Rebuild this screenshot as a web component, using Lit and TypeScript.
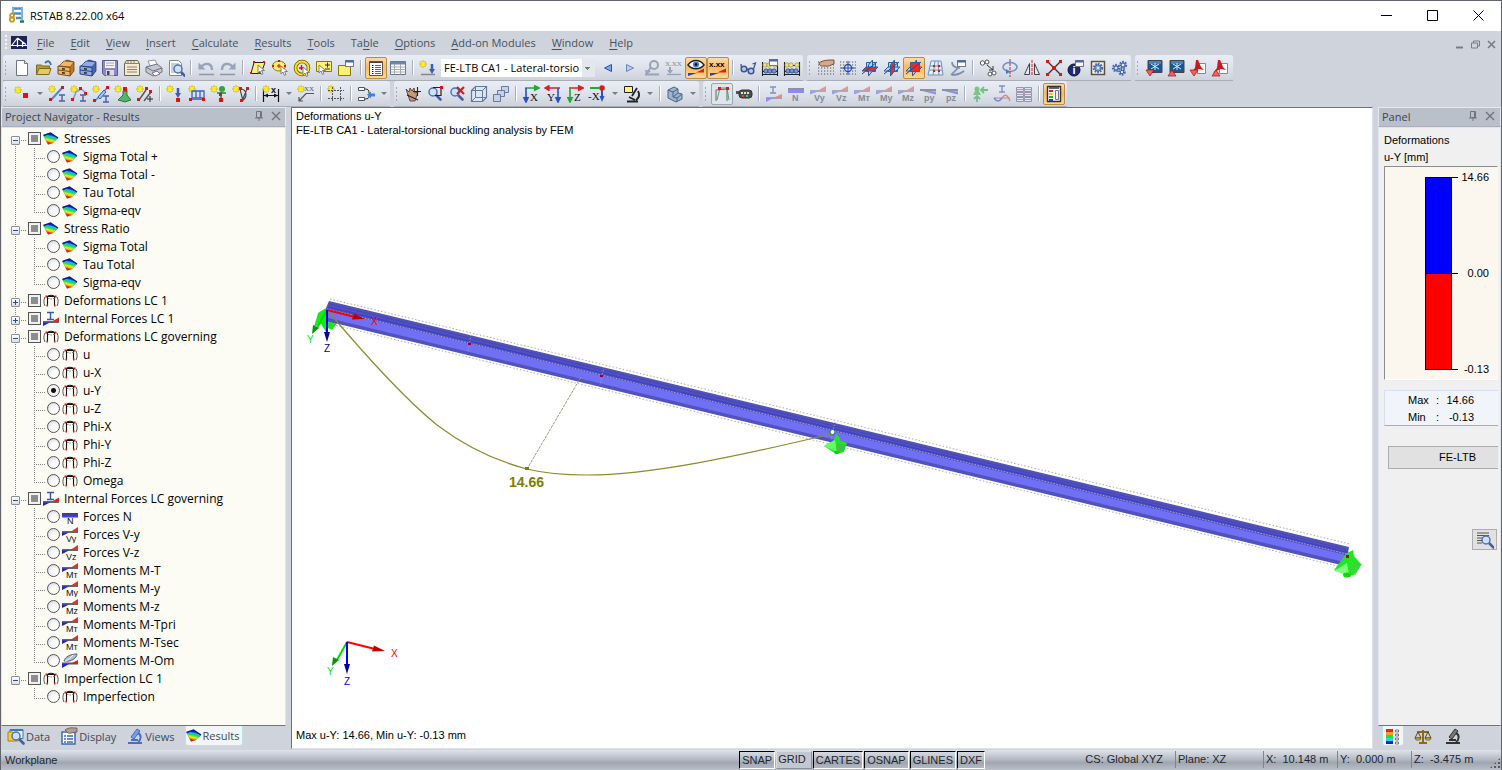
import { LitElement, html, svg, css, TemplateResult } from "lit";
import { customElement, property, state } from "lit/decorators.js";
import { classMap } from "lit/directives/class-map.js";

/* ---------- icon building blocks ---------- */

const star = (x: number, y: number) => svg`<g transform="translate(${x} ${y})">
  <path d="M-3.5 0H3.5M0-3.5V3.5M-2.5-2.5L2.5 2.5M2.5-2.5L-2.5 2.5" stroke="#b5a400" stroke-width="1.4"/>
  <path d="M-3 0H3M0-3V3M-2-2L2 2M2-2L-2 2" stroke="#ffee20" stroke-width="1.2"/></g>`;
const node = (x: number, y: number, s = 3) =>
  svg`<rect x=${x} y=${y} width=${s} height=${s} fill="#e01212"/>`;
const lens = (x: number, y: number) => svg`
  <path d="M${x + 3} ${y + 3}l4.500 4.500" stroke="#4a5c9c" stroke-width="2.600" stroke-linecap="round"/>
  <circle cx=${x} cy=${y} r="4" fill="#cfe2fb" stroke="#5470b4" stroke-width="1.500"/>`;
const cursor = (x: number, y: number) =>
  svg`<path transform="translate(${x} ${y})" d="M0 0v8l2-2 1.500 3.500 1.500-.8L3.600 5.500H6.500z" fill="#fff" stroke="#777" stroke-width=".9"/>`;
const label = (t: string, x: number, y: number, size = 9, fill = "#333") =>
  svg`<text x=${x} y=${y} font-size=${size} fill=${fill} font-family="Liberation Sans, sans-serif" font-weight="bold">${t}</text>`;
const serif = (t: string, x: number, y: number, size = 9, fill = "#111") =>
  svg`<text x=${x} y=${y} font-size=${size} fill=${fill} font-family="Liberation Serif, serif">${t}</text>`;
const ibeam = (x: number, y: number, c = "#4a60a8") =>
  svg`<path d="M${x} ${y}h6M${x + 3} ${y}v6M${x} ${y + 6}h6" stroke=${c} stroke-width="1.4"/>`;
const cabinet = (a: string, b: string, c: string) => svg`
  <path d="M5 4l5-3 7 2v9l-4 5z" fill=${b} stroke=${c} stroke-width=".8"/><path d="M2 7l5-5 10 1-4 5z" fill=${a} stroke=${c} stroke-width=".6"/>
  <path d="M1 7l12 1.500V17L1 15z" fill=${a} stroke=${c} stroke-width=".9"/>
  <path d="M1 11l12 1.500" stroke=${c} stroke-width=".9"/>
  <path d="M5 9.700l3 .4M5 13.700l3 .4" stroke="#222" stroke-width="1.400"/>`;
const plane = (mode: number) => {
  const square = svg`<path d="M5.500 3.500h9v9h-9z" fill=${mode === 2 ? "#f02828" : "#a9d2f4"}/>`;
  const flat = svg`<path d="M1 12l4-4h12l-4 4z" fill=${mode === 0 ? "#f02828" : "#a9d2f4"}/>`;
  const side = svg`<path d="M7.500 6l4-5v11l-4 5z" fill=${mode === 1 ? "#f02828" : "#a9d2f4"}/>`;
  const order = mode === 2 ? [flat, side, square] : mode === 0 ? [square, side, flat] : [square, flat, side];
  return svg`<g stroke="#2b5da0">${order}<path d="M1 15l15-12" stroke="#1f4c90"/></g>`;
};
const axes = (h: string, v: string, t: string, flip = false) => svg`
  <path d=${flip ? "M16 3H3M5.500 .5L1 3l4.500 2.500" : "M3 3h12M12 .5L17 3l-5 2.500"} stroke=${h} fill=${h} stroke-width="1.6"/>
  <path d=${flip ? "M14 3v12M11.500 12L14 17l2.500-5" : "M4 3v12M1.500 12L4 17l2.500-5"} stroke=${v} fill=${v} stroke-width="1.6"/>
  ${serif(t, flip ? 3 : 8, 16, 11)}`;
const force = (t: string, kind = 0) => svg`
  ${kind === 1
    ? svg`<path d="M1 3h16v3H1z" fill="#8d919b"/><path d="M1 5h16v3H1z" fill="#8c8cf0"/>`
    : kind === 2
      ? svg`<path d="M1 4h16v2H1z" fill="#8d919b"/><path d="M1 5.500l16 1v3z" fill="#8c8cf4"/>`
      : svg`<path d="M1 6h16" stroke="#9a9ea8" stroke-width="1.600"/><path d="M9 5.500L17 1v4.500z" fill="#e4949a"/><path d="M1 6.500h8l-8 3z" fill="#9c9cf4"/>`}
  ${label(t, 5, 16, 9, "#868b95")}`;
const treeForce = (t: string, n = false) => svg`
  ${n
    ? svg`<path d="M0 4h16v2H0z" fill="#444"/><path d="M0 5.500h16v3H0z" fill="#3a3af0"/>`
    : svg`<path d="M0 5h16" stroke="#555" stroke-width="1.800"/><path d="M9 4.500L16 0v4.500z" fill="#e03030"/><path d="M0 5.500h7L0 9z" fill="#2020e8"/>`}
  <text x=${n ? 5 : 4} y="15" font-size="9" fill="#111" font-family="Liberation Sans, sans-serif">${t}</text>`;
const gear = (x: number, y: number, r: number, c = "#4a6cb8") => svg`
  <circle cx=${x} cy=${y} r=${r} fill="none" stroke=${c} stroke-width="2.400" stroke-dasharray="1.600 1"/>
  <circle cx=${x} cy=${y} r=${r - 0.8} fill="#8ca8dc" stroke="#2c4a90" stroke-width=".8"/>
  <circle cx=${x} cy=${y} r="1" fill="#fff"/>`;
const abacus = svg`
  <path d="M1.500 3v14M16.500 3v14M1 6.500h16M1 12.500h16M1 15.500h16" stroke="#222" stroke-width="1.100"/>
  <g fill="#f0e08c" stroke="#8d8030" stroke-width=".6"><circle cx="4" cy="6" r="2.200"/><circle cx="8" cy="6" r="2.200"/><circle cx="14" cy="6" r="2.200"/></g>
  <g fill="#7c98dc" stroke="#1d2f66" stroke-width=".7"><circle cx="5" cy="12" r="2.200"/><circle cx="9" cy="12" r="2.200"/><circle cx="13" cy="12" r="2.200"/></g>`;
const microscope = (c: string, d: string) => svg`
  <path d="M2 16h14M5 13h7" stroke=${d} stroke-width="2"/><path d="M11 2l3 2-6 8-3-2z" fill=${c} stroke=${d}/>
  <path d="M12 6c4 2 3 7 0 9" fill="none" stroke=${d} stroke-width="2"/>`;
const miniwin = (x: number, y: number) => svg`
  <rect x=${x} y=${y} width="8" height="6" fill="#fff" stroke="#778" /><path d="M${x} ${y + 1}h8" stroke="#4a66a8" stroke-width="2"/>`;
const grid9 = svg`<path d="M1 3h16M1 6h16M1 9h16M1 12h16M1 15h16" stroke="#555" stroke-width="1.200" stroke-dasharray="1.200 1.800"/>`;
const dxf = svg`<path d="M3 1.500h14v12H3z" fill="#17589c" stroke="#444"/><path d="M4 2h12v3H4z" fill="#3d84c4"/><path d="M6 5l8 5M14 5L6 10M10 4v7" stroke="#d8ecfa"/>`;
const pdf = svg`<path d="M8.500 4.500h8v10h-8z" fill="#fff" stroke="#888"/><path d="M7 1l2 0 3 7 3 3-5-1-5 2-3 2 4-5z" fill="#d01818"/>`;
const triDown = svg`<path d="M1 11h8l-4 6z" fill="#f86060" stroke="#a01010" stroke-width=".7"/>`;
const triUp = svg`<path d="M1 17h8l-4-6z" fill="#f86060" stroke="#a01010" stroke-width=".7"/>`;

const ICONS: Record<string, TemplateResult | unknown> = {
  newdoc: svg`<path d="M3.500 1.500h8l3 3v12h-11z" fill="#fff" stroke="#70757f"/><path d="M11.500 1.500v3h3" fill="#e6e8ee" stroke="#70757f"/>`,
  open: svg`<path d="M1.500 15.500V6h5l1 1h7v3" fill="#b89c30" stroke="#7d6a18"/><path d="M1.500 15.500L4 9.500h12l-2 6z" fill="#e2cc62" stroke="#7d6a18"/><path d="M10 4c3-3 5-2 6 2" fill="none" stroke="#466a9c" stroke-width="1.800"/>`,
  archA: cabinet("#f2b764", "#c07a25", "#6b3f0d"),
  archB: cabinet("#8fabea", "#4468b8", "#1e356e"),
  save: svg`<path d="M1.500 1.500h15v15h-13l-2-2z" fill="#8c86cc" stroke="#5c5898"/><path d="M4 2h10v7H4z" fill="#f3f3f8"/><path d="M5 4h8M5 6.500h8" stroke="#aaa"/><path d="M5 11h8v5.500H5z" fill="#dcdce6"/><path d="M6 12h2.500v4H6z" fill="#444"/>`,
  clip: svg`<path d="M1.500 4.500l2-3h11l2 3v12h-15z" fill="#f5ead2" stroke="#6b6350"/><path d="M1.500 4.500h15M5 2v2M8 2v2M11 2v2M4 8h10M4 10.500h10M4 13h10" stroke="#8c806a"/>`,
  print: svg`<path d="M3 2l7-1 3 6-7 2z" fill="#fff" stroke="#999"/><path d="M1 8l11-3 5 4v4l-9 4-7-4z" fill="#c5c8d2" stroke="#70747f"/><path d="M1 8l7 4 9-3" fill="none" stroke="#70747f"/><path d="M7 14l5-2 3 3-5 2z" fill="#fff" stroke="#7a6ba0"/>`,
  preview: svg`<path d="M2.500 1.500h9l3 3v12h-12z" fill="#fff" stroke="#888"/><path d="M4 5h8M4 7h6M4 9h5M4 11h4M4 13h5" stroke="#9a9fa9"/>${lens(11, 10)}`,
  undo: svg`<path d="M4 8c4-5 11-4 11 3" fill="none" stroke="#98a4ba" stroke-width="2.400"/><path d="M1.500 3.500v7h7z" fill="#98a4ba"/><path d="M2 15.500h15" stroke="#8f97a6" stroke-width="1.500"/>`,
  redo: svg`<path d="M14 8C10 3 3 4 3 11" fill="none" stroke="#98a4ba" stroke-width="2.400"/><path d="M16.500 3.500v7h-7z" fill="#98a4ba"/><path d="M1 15.500h15" stroke="#8f97a6" stroke-width="1.500"/>`,
  selPoly: svg`<path d="M5 3.500h11l-4 11H2z" fill="#ffef70" stroke="#222"/>${node(4, 2, 2)}${node(14, 2, 2)}${node(1, 13, 2)}${node(9, 13, 2)}${cursor(9, 6)}`,
  selEll: svg`<ellipse cx="8" cy="7" rx="6.500" ry="5" fill="#ffef70" stroke="#8a7a00"/>${node(7, 1, 2)}${node(1, 6, 2)}${node(13, 6, 2)}<path d="M6 7h4M8 5v4" stroke="#e00"/>${cursor(10, 7)}`,
  selRing: svg`<circle cx="9" cy="9" r="6.500" fill="none" stroke="#6b5b00" stroke-width="3.500"/><circle cx="9" cy="9" r="6.500" fill="none" stroke="#ffe020" stroke-width="2"/><path d="M6 9h5M8.500 6v5" stroke="#e00" stroke-width="1.300"/>${cursor(10, 8)}`,
  selPm: svg`<path d="M1.500 2.500h15v10h-15z" fill="#ffef70" stroke="#8a7a00"/><path d="M10 6h5M12.500 3.500v5M10 10h5" stroke="#333"/>${cursor(4, 6)}`,
  selWin: svg`<path d="M1.500 6.500h12v10h-12z" fill="#ffef70" stroke="#8a7a00"/>${miniwin(8.5, 1.5)}`,
  navList: svg`<path d="M2.500 2.500h13v14h-13z" fill="#fff" stroke="#555"/><path d="M2.500 3.500h13" stroke="#445"/><path d="M5 6.500h1.500M5 8.500h1.500M5 10.500h1.500M5 12.500h1.500M5 14.500h1.500" stroke="#222"/><path d="M8 6.500h6M8 8.500h6M8 10.500h6M8 12.500h6M8 14.500h6" stroke="#666"/>`,
  table: svg`<path d="M1.500 2.500h15v13h-15z" fill="#fff" stroke="#66707e"/><path d="M1.500 2.500h15v3h-15z" fill="#6886b4"/><path d="M5.500 5v10.500M11.500 5v10.500M1.500 8h15M1.500 10.500h15M1.500 13h15" stroke="#a3aab6"/>`,
  loadNew: svg`${star(4, 5)}<path d="M2 15.500h14" stroke="#888" stroke-width="1.500"/><path d="M13 5v6" stroke="#3c60b0" stroke-width="2.500"/><path d="M10 10h6l-3 5z" fill="#3c60b0"/>`,
  prev: svg`<path d="M12.500 5.500v7l-7-3.500z" fill="#7ea4ee" stroke="#2a52b0"/>`,
  next: svg`<path d="M5.500 5.500v7l7-3.500z" fill="#b9cbee" stroke="#6a84bc"/>`,
  showP: svg`<circle cx="11" cy="6" r="4" fill="#dfe3ea" stroke="#98a3b8" stroke-width="2"/><path d="M8 8L4 14M2 15.500h14" fill="none" stroke="#98a3b8" stroke-width="1.800"/><path d="M2 11l6 1-5 4z" fill="#98a3b8"/>`,
  showX: svg`${serif("X.XX", 0, 7, 7, "#888")}<path d="M2 15.500h14" stroke="#98a3b8" stroke-width="1.300"/><path d="M5 8v4" stroke="#98a3b8" stroke-width="2"/><path d="M2 11h6l-3 4z" fill="#98a3b8"/>`,
  eye: svg`<path d="M1 6c4-6 12-6 16 0-4 5-12 5-16 0z" fill="#fff" stroke="#222" stroke-width="1.400"/><circle cx="9" cy="5.500" r="3" fill="#3b7ad0"/><circle cx="9" cy="5.500" r="1.300" fill="#000"/><path d="M1 17v-3h9z" fill="#2a3ae8"/><path d="M9 13.500h8v-4z" fill="#e02020"/>`,
  xxx: svg`${label("x.xx", 0, 8, 8, "#000")}<path d="M1 17v-3h9z" fill="#2a3ae8"/><path d="M8 13.500h9v-4z" fill="#e02020"/>`,
  glasses: svg`<circle cx="5" cy="10" r="2.800" fill="#b7c9ec" stroke="#3c5490" stroke-width="1.500"/><circle cx="12" cy="12" r="2.800" fill="#b7c9ec" stroke="#3c5490" stroke-width="1.500"/><path d="M8 11c0-1 1-1 2 0M2.500 9L2 5M14.500 10l2-6-3 1" fill="none" stroke="#3c5490" stroke-width="1.300"/>`,
  calcWin: svg`${abacus}${miniwin(8.5, 0.5)}`,
  calc: abacus,
  handGrid: svg`${grid9}<path d="M2 4c4-3 9-3 15-3v4c-4 1-5 3-9 2-3 0-5 1-6-3z" fill="#d9a784" stroke="#59351d" stroke-width=".8"/>`,
  snapGrid: svg`${grid9}<circle cx="9" cy="9" r="3.500" fill="#dfe5f4" stroke="#2848b8" stroke-width="1.300"/><path d="M9 2v14M2 9h14" stroke="#2848b8"/>`,
  planeXY: plane(0), planeYZ: plane(1), planeXZ: plane(2),
  gridMesh: svg`<path d="M4 2h10l2 14H1zM3 7h12M2 11h13M8 2L6 16M11 2l1 14" fill="#e2eef8" stroke="#6c94b8"/>${node(6, 6, 2)}${node(11, 6, 2)}${node(6, 11, 2)}${node(11, 11, 2)}`,
  wrench: svg`<path d="M2 16l8-8M3 3c0 5 4 6 8 6M3 16c3 0 8-1 12-4" fill="none" stroke="#7a8cb0" stroke-width="1.700"/>${miniwin(8.5, 1.5)}`,
  copyMove: svg`<circle cx="3.500" cy="4" r="2.200" fill="#fff" stroke="#555"/><circle cx="8" cy="3" r="2" fill="#fff" stroke="#555"/><path d="M8 6l6 5m0-4v4h-4" fill="none" stroke="#333"/><circle cx="11" cy="15" r="2" fill="#fff" stroke="#555"/><circle cx="15" cy="14" r="2" fill="#fff" stroke="#555"/>`,
  rotate: svg`<ellipse cx="9" cy="8" rx="7" ry="4.500" fill="none" stroke="#6c94cc" stroke-width="1.600"/><path d="M9 0v18" stroke="#e02020" stroke-dasharray="3 1"/><path d="M5 10l4 3-4 2z" fill="#4878c0"/>`,
  mirror: svg`<path d="M1.500 15.500h5v-11zM16.500 15.500h-5v-11z" fill="#e6e9ef" stroke="#444"/><path d="M9 1v16" stroke="#e02020" stroke-dasharray="3 1"/>`,
  explode: svg`<path d="M2 2l14 14M16 2L2 16" stroke="#333" stroke-width="1.400"/>${node(1, 1)}${node(14, 1)}${node(1, 14)}${node(14, 14)}${node(7, 7, 4)}`,
  infoWin: svg`<circle cx="7" cy="11" r="6" fill="#1c2c70" stroke="#0a1440"/>${label("i", 5.5, 15, 11, "#fff")}${miniwin(8.5, 1.5)}`,
  gearBox: svg`<path d="M2.500 2.500h13v13h-13z" fill="#f4efe4" stroke="#5b5340" stroke-width="1.500"/>${gear(9, 9, 4)}`,
  gears: svg`${gear(5, 9, 3)}${gear(12, 6, 3)}${gear(11, 13, 2.6)}`,
  impA: svg`${dxf}${triDown}`, impB: svg`${dxf}${triUp}`, impC: svg`${pdf}${triDown}`, impD: svg`${pdf}${triUp}`,

  nNode: svg`${star(5, 5)}${node(10, 8, 5)}`,
  nLine: svg`${star(4, 4)}<path d="M3 15L14 3" stroke="#5088d0" stroke-width="2"/>${node(13, 1)}${node(1, 13)}${ibeam(11, 10)}`,
  nPoly: svg`${star(4, 4)}<path d="M3 15l3-8 5-3 5 4" fill="none" stroke="#7aa0d8" stroke-width="1.600"/>${node(9, 2)}${node(14, 7)}${node(1, 13)}${ibeam(10, 10)}`,
  nMember: svg`${star(4, 4)}<path d="M3 16L15 3" stroke="#5088d0" stroke-width="1.400"/><path d="M6 12l6-7 2 2-6 7z" fill="#9cc8f4" stroke="#3060b0"/>${node(14, 1)}${node(1, 14)}${ibeam(11, 11)}`,
  nSupp: svg`${star(4, 4)}<path d="M9 6h4v4l4 5-6 2-7-2 5-5z" fill="#56b468" stroke="#176426" stroke-width=".8"/>${node(9, 2, 4)}`,
  nHinge: svg`${star(4, 4)}<path d="M3 15L10 5M8 16l7-9" stroke="#555" stroke-width="1.400"/>${node(9, 2)}${node(13, 5)}${node(1, 13)}<path d="M11 14h6M14 11v6" stroke="#222"/>`,
  nLoad: svg`${star(4, 4)}<path d="M12 3v6" stroke="#3c60b0" stroke-width="2.500"/><path d="M9 8h6l-3 5z" fill="#3c60b0"/>${node(10, 13, 4)}`,
  mLoad: svg`${star(4, 4)}<path d="M4 6h12v7H4zM8 6v7M12 6v7" stroke="#3a62c0" stroke-width="1.300"/><path d="M2 14.500h15" stroke="#777"/>${node(1, 13)}${node(14, 13)}`,
  nDisp: svg`${star(4, 4)}<circle cx="12" cy="4" r="3" fill="#38a048"/><path d="M7 8h9M11 7v8" stroke="#28803a" stroke-width="1.600"/>${node(9, 8)}${node(9, 13, 4)}`,
  nImp: svg`${star(4, 4)}<path d="M8 4c7 0 8 8 2 12M8 4l3 12M15 4l-5 12" fill="none" stroke="#444" stroke-width="1.100"/>${node(7, 2)}${node(14, 2)}${node(8, 14)}`,
  dim: svg`<path d="M1.500 4v13M16.500 4v13M2 10.500h14" stroke="#111" stroke-width="1.200"/><path d="M2 10.500l4-2v4zM16 10.500l-4-2v4z" fill="#111"/>${star(4, 4)}${label("x", 9, 8, 9, "#111")}`,
  comment: svg`${star(4, 4)}${serif("XX", 7, 6, 7, "#555")}<path d="M17 8.500H9L2 16m0-4v4h4" fill="none" stroke="#555" stroke-width="1.200"/>`,
  guide: svg`${star(4, 4)}<path d="M5.500 2v15M13.500 2v15M1 5.500h16M1 13.500h16" stroke="#555" stroke-dasharray="2 1"/>`,
  flow: svg`<path d="M1.500 2.500h6v3h-6zM1.500 12.500h6v3h-6z" fill="#fff" stroke="#555"/><path d="M8 4c3 0 4 1 4 4M8 14c3 0 4-1 4-3" stroke="#333" fill="none"/><path d="M10 9.500l4-3v2h4v3h-4v2z" fill="#3c82dc"/>`,
  pan: svg`<path d="M2 4l3 3 1-4 2 3 2-3 1 5 3-1-3 9H6z" fill="#c49a7a" stroke="#4b3020" stroke-width=".8"/><path d="M13.500 2v9M9 6.500h8M3 10l11 5" stroke="#222" stroke-width="1.100"/>`,
  zoomWin: svg`${lens(7, 7)}<path d="M7 2.500h8v8H9" fill="none" stroke="#222" stroke-width="1.200"/>${node(14, 1)}`,
  zoomOff: svg`${lens(7, 7)}<path d="M9 2l7 7M16 2L9 9" stroke="#d81c1c" stroke-width="2.200"/>`,
  cube: svg`<path d="M1.500 5.500l4-4h11v11l-4 4h-11z" fill="#dce6f6" stroke="#6478a4" stroke-width="1.200"/><path d="M1.500 5.500h11v11M12.500 5.500l4-4M5.500 1.500v11h11M5.500 12.500l-4 4" fill="none" stroke="#6478a4"/>`,
  cubes: svg`<g fill="#c8d2e6" stroke="#6a7a9c"><path d="M9.500 1.500h7v6h-7z"/><path d="M5.500 5.500h7v6h-7z"/><path d="M1.500 9.500h7v7h-7z"/></g>`,
  axX: axes("#20a838", "#2a50d0", "X"), axY: axes("#e02020", "#2a50d0", "Y", true), axZ: axes("#e02020", "#20a838", "Z"),
  axmX: svg`<path d="M2 3h9" stroke="#20a838" stroke-width="2"/><path d="M14 3v9" stroke="#2a50d0" stroke-width="2"/><path d="M11.500 11h5L14 17z" fill="#2a50d0"/><circle cx="14" cy="3" r="2.800" fill="#d81c1c"/>${serif("-X", 0, 15, 11)}`,
  viewMic: svg`<path d="M1.500 1.500h8v6h-8z" fill="#fff27a" stroke="#222"/><path d="M14 3l-5 8M6 12l6 3M4 16.500h11M15 6c2 4 1 7-2 9" fill="none" stroke="#222" stroke-width="1.800"/>`,
  render: svg`<path d="M2 5l6-3 4 2v4l4 1v5l-6 3-8-4z" fill="#9cb4d0" stroke="#4c6484"/><path d="M2 5l5 2v5l4 1v4M7 7l5-3M11 13l5-4M7 12l5-4" fill="none" stroke="#4c6484"/>`,
  frameRes: svg`<path d="M3 16V5l11-1v12" fill="none" stroke="#666"/><path d="M4 15L7 3h7l2 12" fill="none" stroke="#4aa866"/>${node(5, 2)}${node(13, 2)}`,
  film: svg`<path d="M1 6h5v3H1z" fill="#555"/><rect x="4" y="5" width="13" height="8" rx="3" fill="#4a4d55" stroke="#333"/><path d="M6 8h2M9 8h2M12 8h2" stroke="#e8e8a0" stroke-width="2"/><path d="M7 11h2" stroke="#e04040" stroke-width="2"/><path d="M11 11h2" stroke="#50c050" stroke-width="2"/>`,
  fAll: svg`${ibeam(5, 2, "#7f93c0")}<path d="M1 13h16" stroke="#8d919b" stroke-width="1.500"/><path d="M9 12.500L17 9v3.500z" fill="#e48a90"/><path d="M1 13h7l-7 4z" fill="#8c8cf4"/>`,
  fN: force("N", 1), fVy: force("Vy"), fVz: force("Vz"), fMt: force("Mᴛ"), fMy: force("My"), fMz: force("Mz"), fpy: force("py", 2), fpz: force("pz", 2),
  react: svg`<circle cx="6" cy="4" r="2.500" fill="#7dc48a"/><path d="M4 6h4l2 4H2z" fill="#7dc48a"/><path d="M17 5h-6M6 17v-5M13 2l-3 3 3 3M3 14l3-3 3 3" stroke="#7abc86" stroke-width="1.800" fill="none"/>`,
  section: svg`${ibeam(6, 1, "#7f93c0")}<path d="M1 13h16" stroke="#999"/><path d="M1 13c3 4 5 4 8 0" stroke="#7c7ce0" stroke-width="1.400"/><path d="M9 13c3-4 5-4 8 3" stroke="#e08088" stroke-width="1.400"/>`,
  tables: svg`<path d="M1.500 2.500h7v4h-7zM9.500 2.500h7v4h-7zM1.500 7.500h7v4h-7zM9.500 7.500h7v4h-7zM1.500 12.500h7v4h-7zM9.500 12.500h7v4h-7z" fill="#e4e6ee" stroke="#8e96b0"/><path d="M2 4.500h14M2 9.500h14M2 14.500h14" stroke="#b09cb0"/>`,
  panel: svg`<path d="M2.500 1.500h13v15h-13z" fill="#fff" stroke="#333" stroke-width="1.400"/><path d="M4 3h10" stroke="#334" stroke-width="1.500"/><path d="M10.500 5.500h3v9h-3z" fill="#eee" stroke="#777"/><path d="M4 6h4" stroke="#e02020" stroke-width="2"/><path d="M4 9h4" stroke="#e0d020" stroke-width="2"/><path d="M4 12h4" stroke="#20b040" stroke-width="2"/><path d="M4 15h4" stroke="#2040e0" stroke-width="2"/>`,

  tStress: svg`<defs><linearGradient id="rainbow" gradientUnits="userSpaceOnUse" x1="9" y1="2" x2="6" y2="14">
      <stop offset="0.160" stop-color="#1020c0"/><stop offset="0.280" stop-color="#10b8f0"/><stop offset="0.440" stop-color="#20e050"/>
      <stop offset="0.600" stop-color="#d8f020"/><stop offset="0.720" stop-color="#ffb000"/><stop offset="0.820" stop-color="#f02010"/></linearGradient></defs>
    <path d="M.5 4.500L7.500 2l7.500 5-5 5-5 1.500z" fill="url(#rainbow)" stroke="#223" stroke-opacity=".35" stroke-width=".6"/><path d="M.5 4.500L7.500 2l7.500 5" stroke="#1018a0" stroke-width="1.400"/>`,
  tDef: svg`<path d="M4.500 13V4M11.500 13V4M4 3.500h8M5 3c2-1 4-1 6 0" fill="none" stroke="#111" stroke-width="1.100"/><path d="M5 5.500h1.500M7.500 6h1.500M10 5.500h1.500" stroke="#888"/><path d="M2 4c-1.500 3-1.500 6 0 9M14 4c1.500 3 1.500 6 0 9" fill="none" stroke="#555"/><path d="M2.500 3.500h2M11.500 3.500h2M3.500 12.500h1.500M11 12.500h1.500" stroke="#e01212" stroke-width="1.800"/>`,
  tInt: svg`<path d="M4 1.500h7M7.500 1.500v7M4 8.500h7" stroke="#3458a8" stroke-width="1.400"/><path d="M0 11h16" stroke="#666" stroke-width="2"/><path d="M9 10.500l7-4v4z" fill="#e02020"/><path d="M0 11.500h7L0 15z" fill="#2020e8"/>`,
  tN: treeForce("N", true), tVy: treeForce("Vy"), tVz: treeForce("Vz"), tMt: treeForce("Mᴛ"), tMy: treeForce("My"), tMz: treeForce("Mz"),
  tOm: svg`<path d="M2 8c1-4 6-7 13-7 0 4-6 8-11 7z" fill="#a8bcd4" stroke="#55606c"/><path d="M3 8c3-1 6-3 8-6" stroke="#fff"/><path d="M0 10.500h16" stroke="#555" stroke-width="2"/><path d="M10 10l6-3v3z" fill="#e02020"/><path d="M0 11h7l-7 4z" fill="#2020e8"/>`,

  tabData: svg`<path d="M3 2.500h13v9H3z" fill="#eef4fd" stroke="#3c78c8"/><path d="M3 3h13" stroke="#3c78c8" stroke-width="2"/><path d="M1 5h5l1 1h4v8H1z" fill="#f4cc38" stroke="#a88418"/>${lens(9, 9)}`,
  tabDisplay: svg`<path d="M2 5h13v12H2z" fill="#fff" stroke="#3c68b8" stroke-width="1.500"/><path d="M4 9h2M4 12h2M4 15h2M7 9h6M7 12h6M7 15h6" stroke="#3c68b8" stroke-width="1.300"/><path d="M5 3c4-3 7-2 12-2v4c-4 0-6 2-9 1z" fill="#b89c88" stroke="#554" stroke-width=".8"/>`,
  tabViews: microscope("#7a9ce8", "#4d6cc0"),
  tabMic: microscope("#777", "#333"),
  tabScale: svg`<path d="M9 3v12M3 5h12M5 16h8" stroke="#8a6c18" stroke-width="2"/><path d="M4 5l-3 6h6zM14 5l-3 6h6z" fill="none" stroke="#5c4810"/><path d="M1 11h6l-1 2H2zM11 11h6l-1 2h-4z" fill="#e4bc48" stroke="#5c4810" stroke-width=".7"/>`,
  tabColors: svg`<path d="M2 2h7v3H2z" fill="#f02020"/><path d="M2 5h7v3H2z" fill="#f8a020"/><path d="M2 8h7v3H2z" fill="#20e030"/><path d="M2 11h7v3H2z" fill="#20d8e8"/><path d="M2 14h7v3H2z" fill="#1818e0"/><path d="M11.500 3h3v2h-3zM11.500 7h3v2h-3zM11.500 11h3v2h-3zM11.500 15h3v2h-3z" fill="#fff" stroke="#777"/>`,
  find: svg`<path d="M1 2h12M1 4.500h12M1 7h8M1 9.500h5M1 12h5" stroke="#555"/>${lens(10, 9)}`,
  pin: svg`<path d="M6.500 4.500h5v6h-5zM10.500 4.500v6M5 11h8M9 11v3" fill="none" stroke="#70757d"/>`,
  close: svg`<path d="M5 5l8 8M13 5l-8 8" stroke="#70757d" stroke-width="1.400"/>`,
  app: svg`<path d="M4 2.500h11M6 7.500h9M8 12h7" stroke="#4a8ec8" stroke-width="2.500"/><path d="M5 2v6M14 2v12" stroke="#7ab4e4" stroke-width="2"/><path d="M12 15.500h4" stroke="#2c7a44" stroke-width="2.500"/><circle cx="4" cy="9.500" r="2" fill="none" stroke="#c8961e" stroke-width="1.800"/><circle cx="4" cy="13.500" r="2.200" fill="none" stroke="#c8961e" stroke-width="1.800"/>`,
};

const icon = (name: string, size = 18) => html`<svg class="icon" width=${size} height=${size}
  viewBox="0 0 ${size} ${size}" fill="none" aria-hidden="true">${ICONS[name]}</svg>`;

/* ---------- data ---------- */

const MENUS = [
  ["", "F", "ile"], ["", "E", "dit"], ["", "V", "iew"], ["", "I", "nsert"], ["", "C", "alculate"], ["", "R", "esults"],
  ["", "T", "ools"], ["Ta", "b", "le"], ["", "O", "ptions"], ["", "A", "dd-on Modules"], ["", "W", "indow"], ["", "H", "elp"],
];

/* "|" separator, "v" drop-down arrow, "+" active tool, "-" pressed tool, "@" load case combo */
const ROW1 = [
  "newdoc open archA archB save clip print preview | undo redo | selPoly selEll selRing selPm selWin | +navList table | loadNew @ prev next showP showX +eye +xxx | glasses calcWin calc",
  "handGrid snapGrid planeXY planeYZ +planeXZ gridMesh wrench | copyMove rotate mirror explode infoWin gearBox gears",
  "impA impB impC impD",
];
const ROW2 = [
  "nNode v nLine nPoly nMember nSupp nHinge | nLoad mLoad nDisp nImp | dim v comment | guide | flow v",
  "pan zoomWin zoomOff cube cubes | axX axY axZ axmX v viewMic v | render v",
  "-frameRes film | fAll fN fVy fVz fMt fMy fMz fpy fpz | react section tables | +panel",
];

interface Branch { name: string; icon: string; open: boolean; items: [string, string][]; }
const TREE: Branch[] = [
  { name: "Stresses", icon: "tStress", open: true, items: [["Sigma Total +", "tStress"], ["Sigma Total -", "tStress"], ["Tau Total", "tStress"], ["Sigma-eqv", "tStress"]] },
  { name: "Stress Ratio", icon: "tStress", open: true, items: [["Sigma Total", "tStress"], ["Tau Total", "tStress"], ["Sigma-eqv", "tStress"]] },
  { name: "Deformations LC 1", icon: "tDef", open: false, items: [] },
  { name: "Internal Forces LC 1", icon: "tInt", open: false, items: [] },
  { name: "Deformations LC governing", icon: "tDef", open: true, items: ["u", "u-X", "u-Y", "u-Z", "Phi-X", "Phi-Y", "Phi-Z", "Omega"].map((n) => [n, "tDef"] as [string, string]) },
  { name: "Internal Forces LC governing", icon: "tInt", open: true, items: [["Forces N", "tN"], ["Forces V-y", "tVy"], ["Forces V-z", "tVz"], ["Moments M-T", "tMt"], ["Moments M-y", "tMy"], ["Moments M-z", "tMz"], ["Moments M-Tpri", "tMt"], ["Moments M-Tsec", "tMt"], ["Moments M-Om", "tOm"]] },
  { name: "Imperfection LC 1", icon: "tDef", open: true, items: [["Imperfection", "tDef"]] },
];

const shared = css`
  * { box-sizing: border-box; }
  button { font: inherit; color: inherit; background: none; border: 0; padding: 0; margin: 0; }
  .icon { display: block; flex: none; }
  .caption {
    display: flex; align-items: center; height: 20px; padding: 0 2px 2px 3px; flex: none;
    background: #b9c0ca; color: #3c444e; border: 1px solid #e4eaf4; border-bottom-color: #aab0bb;
    font: 11px "Open Sans", "Noto Sans", sans-serif;
  }
  .caption h2 { flex: 1; margin: 0; font: inherit; }
  .caption button { width: 17px; display: flex; justify-content: center; }
`;

/* ---------- toolbars ---------- */

@customElement("tool-strip")
class ToolStrip extends LitElement {
  @property({ attribute: false }) groups: string[] = [];

  static styles = [shared, css`
    :host { display: flex; gap: 4px; height: 26px; padding-left: 2px; }
    .group {
      display: flex; align-items: center; border-radius: 3px 3px 0 0;
      background: linear-gradient(#e9edf6, #dde2eb 50%, #cdd2dc); border-bottom: 1px solid #a9adb6;
    }
    .group:last-child { padding-right: 2px; }
    .grip {
      width: 8px; height: 16px; flex: none;
      background: radial-gradient(circle, #a2a8b4 1px, transparent 1px) 0 0 / 5px 4px repeat-y;
    }
    .tool { width: 22px; height: 22px; display: flex; align-items: center; justify-content: center; flex: none; }
    .tool.on {
      border: 1px solid #b98b45; border-radius: 2px;
      background: linear-gradient(#fbdcae, #fbb963 45%, #fdd98c);
    }
    .tool.set { border: 1px solid #9aa6b2; background: #dfe5ea; border-radius: 2px; }
    .sep { width: 8px; height: 15px; flex: none; background: linear-gradient(90deg, transparent 3px, #a9afba 3px 4px, #fff 4px 5px, transparent 5px); }
    .arrow { width: 13px; height: 22px; display: flex; align-items: center; justify-content: center; flex: none; }
    .arrow::before { content: ""; border: 3px solid transparent; border-top-color: #777d88; border-bottom: 0; }
    .combo { display: flex; align-items: stretch; width: 154px; height: 18px; margin: 0 2px; background: #fff; }
    select {
      flex: 1; width: 100%; appearance: none; border: 0; margin: 0; padding: 0 14px 0 3px; border-radius: 0; color: #000;
      font: 11px "Open Sans", "Noto Sans", sans-serif; text-overflow: clip;
      background:
        linear-gradient(#777, #777) right 5px top 8px / 5px 1px no-repeat,
        linear-gradient(#777, #777) right 6px top 9px / 3px 1px no-repeat,
        linear-gradient(#777, #777) right 7px top 10px / 1px 1px no-repeat,
        linear-gradient(#e3e7ee, #e3e7ee) right 0 top 0 / 13px 100% no-repeat #fff;
    }
  `];

  private item(token: string) {
    if (token === "|") return html`<span class="sep"></span>`;
    if (token === "v") return html`<button class="arrow" aria-label="More"></button>`;
    if (token === "@")
      return html`<span class="combo"><select aria-label="Load case"><option>FE-LTB CA1 - Lateral-torsio</option></select></span>`;
    const on = token[0] === "+";
    const set = token[0] === "-";
    const name = on || set ? token.slice(1) : token;
    return html`<button class=${classMap({ tool: true, on, set })} aria-label=${name}>${icon(name)}</button>`;
  }

  render() {
    return this.groups.map((g) => html`<div class="group" role="toolbar"><span class="grip"></span>${g.split(" ").map((t) => this.item(t))}</div>`);
  }
}

/* ---------- navigator ---------- */

@customElement("project-navigator")
class ProjectNavigator extends LitElement {
  @state() private selected = "u-Y";

  static styles = [shared, css`
    :host { display: flex; flex-direction: column; font: 12px "Open Sans", "Noto Sans", sans-serif; min-height: 0; }
    .tree {
      flex: 1; margin: 0; padding: 2px 0 0; list-style: none; background: #fcfcf4; color: #000; overflow: hidden;
      border: 1px solid #dfe5f0; border-bottom: 1px solid #70747c;
    }
    ul ul { margin: 0; padding: 0; list-style: none; }
    .branch { background: repeating-linear-gradient(#858585 0 1px, transparent 1px 2px) 13px 0 / 1px 100% no-repeat; }
    .branch:first-child { background-position-y: 10px; }
    .branch:last-child { background-size: 1px 10px; }
    .row { display: flex; align-items: center; height: 18px; }
    .branch > .row {
      padding-left: 9px;
      background: repeating-linear-gradient(90deg, #858585 0 1px, transparent 1px 2px) 19px 10px / 6px 1px no-repeat;
    }
    .leaf {
      padding-left: 45px;
      background:
        repeating-linear-gradient(#858585 0 1px, transparent 1px 2px) 32px 0 / 1px 100% no-repeat,
        repeating-linear-gradient(90deg, #858585 0 1px, transparent 1px 2px) 32px 10px / 12px 1px no-repeat;
    }
    .leaf:last-child { background-size: 1px 10px, 12px 1px; }
    .toggle {
      width: 9px; height: 9px; margin: 2px 8px 0 0; border: 1px solid #8b8f98; border-radius: 1px; flex: none;
      background: linear-gradient(#2b4aa8, #2b4aa8) center / 5px 1px no-repeat, linear-gradient(#fff, #dedede);
    }
    .toggle.shut {
      background: linear-gradient(#2b4aa8, #2b4aa8) center / 5px 1px no-repeat,
        linear-gradient(#2b4aa8, #2b4aa8) center / 1px 5px no-repeat, linear-gradient(#fff, #dedede);
    }
    label { display: flex; align-items: center; white-space: nowrap; line-height: 18px; }
    .text { margin-left: 5px; }
    .icon { margin-left: 2px; }
    input { appearance: none; margin: 0 0 1px; width: 13px; height: 13px; flex: none; }
    input[type="checkbox"] {
      border: 1px solid #555; background: linear-gradient(#8d8d8d, #8d8d8d) center / 7px 7px no-repeat #f2f2f2;
    }
    input[type="radio"] { border: 1px solid #555; border-radius: 50%; background: radial-gradient(circle at 60% 65%, #fff 30%, #c9cfdc); }
    input[type="radio"]:checked { background: radial-gradient(circle, #111 2px, transparent 3px), #f4f4f6; }
    .tabs { display: flex; height: 23px; align-items: flex-start; flex: none; padding-left: 6px; gap: 10px; color: #3f4a58; font-size: 11px; }
    .tabs button { display: flex; align-items: center; height: 20px; gap: 1px; }
    .tabs .icon { margin-left: 0; }
    .tabs button.on { background: #f3f6f8; border: 1px solid #b8e4e8; border-top: 0; border-radius: 0 0 3px 3px; padding: 0 3px 0 0; }
  `];

  private branch(b: Branch) {
    return html`<li class="branch">
      <div class="row">
        <button class=${classMap({ toggle: true, shut: !b.open })} aria-label="Toggle"></button>
        <label><input type="checkbox" .indeterminate=${true} />${icon(b.icon, 16)}<span class="text">${b.name}</span></label>
      </div>
      <ul>${b.items.map(([name, ic]) => html`<li class="row leaf"><label>
        <input type="radio" name="result" .checked=${name === this.selected} @change=${() => (this.selected = name)} />${icon(ic, 16)}<span class="text">${name}</span>
      </label></li>`)}</ul>
    </li>`;
  }

  render() {
    return html`
      <div class="caption"><h2>Project Navigator - Results</h2>
        <button aria-label="Pin">${icon("pin")}</button><button aria-label="Close">${icon("close")}</button></div>
      <ul class="tree">${TREE.map((b) => this.branch(b))}</ul>
      <div class="tabs">
        <button>${icon("tabData")}Data</button><button>${icon("tabDisplay")}Display</button>
        <button>${icon("tabViews")}Views</button><button class="on">${icon("tStress", 16)}Results</button>
      </div>`;
  }
}

/* ---------- model view ---------- */

const triad = (x: number, y: number) => svg`<g transform="translate(${x} ${y})">
  <path d="M0 0l-10 18" stroke="#00e000" stroke-width="2"/><path d="M-15 24l1-9 6 3z" fill="#009a00"/>
  <path d="M0 0l26 6.500" stroke="#f00" stroke-width="2"/><path d="M38 9l-13 .5 2-6z" fill="#c00000"/>
  <path d="M0 0v23" stroke="#00f" stroke-width="2"/><path d="M0 32l-3-10h6z" fill="#0000a0"/>
  <text x="-20" y="33" fill="#00e000">Y</text><text x="44" y="15" fill="#f00">X</text></g>`;

@customElement("model-view")
class ModelView extends LitElement {
  static styles = css`
    :host {
      display: flex; flex-direction: column; min-width: 0; background: #fff; color: #000; overflow: hidden; padding-top: 1px;
      border: 1px solid #6e7078; border-right-color: #dfe1e6; border-bottom-color: #dfe1e6;
      font: 11px/14px "Liberation Sans", sans-serif;
    }
    p { margin: 0; padding: 0 4px; white-space: pre; }
    .scene { flex: 1; width: 100%; min-height: 0; display: block; }
    .foot { padding-bottom: 6px; }
    .value { font-size: 14px; font-weight: bold; fill: #808000; }
    .axis { font-size: 10px; }
  `;
  render() {
    return html`<p>Deformations u-Y</p><p>FE-LTB CA1 - Lateral-torsional buckling analysis by FEM</p>
      <svg class="scene" role="img" aria-label="Deformed member"><g transform="translate(-292 -137)" fill="none">
        <path d="M330 299L1350 544M326 323L1341 567" stroke="#aaa" stroke-dasharray="1.500 2"/>
        <path d="M318 313l8-5 8 5 4 9-6 8-4-2-2 4-5-8-7 3z" fill="#1ee61e"/>
        <path d="M329 301L1349 547L1348 553L1341 565L326 321V308z" fill="#5252bd"/>
        <path d="M329 304L1348 550" stroke="#4646b4"/>
        <path d="M328 307L1348 552.500" stroke="#4040d0" stroke-width="1.500"/>
        <path d="M327 309.500L1346 555L1342 561.500L326 317.500z" fill="#7070f6"/>
        <path d="M327 309L1347 554" stroke="#a8a8d0" stroke-dasharray="1.500 1.500"/>
        <path d="M471 335l-3 17M604 367l-4 18M835 422l-4 18" stroke="#a8a8c0" stroke-dasharray="1 2"/>
        <path d="M468 343h3v2h-3zM600 375h3v2h-3z" fill="#900030"/>
        <path d="M328 311C360 349 400 395 437 425C470 450 500 462 527 469C547 474 567 475 587 475C650 475 735 457 831 434" stroke="#8c8c2c" stroke-width="1.200"/>
        <path d="M581 377l-54 92" stroke="#9a9a80" stroke-dasharray="3 1"/>
        <path d="M525 467h4v3h-4z" fill="#808000"/>
        <g><path d="M836 434l4 4-1 6-6-2z" fill="#1ee61e"/><path d="M824 446l12-7 11 4-3 9-8 2z" fill="#22e422"/>
          <path d="M824 446l11-6 2 12z" fill="#62ff62"/><path d="M836 443l10 2-3 7-6 1z" fill="#38c838"/>
          <path d="M834 451h6l-2 3h-3z" fill="#0fd00f"/><circle cx="832.500" cy="432" r="2.500" fill="#fff" stroke="#207070"/></g>
        <g><path d="M1347 553l6-3 1 6 7 8-7 11h-7l-13-5z" fill="#22e622"/><path d="M1334 571l13-8 2 12z" fill="#7cff7c"/>
          <path d="M1351 564l11 0-7 11z" fill="#38d838"/><ellipse cx="1347" cy="575" rx="4" ry="2.500" fill="#10d810"/>
          <path d="M1346 555h3v3h-3z" fill="#a01010"/></g>
        <g class="axis">${triad(327, 310)}<text x="324" y="352" fill="#000080">Z</text>
          ${triad(347, 642)}<text x="344" y="685" fill="#00f">Z</text></g>
        <text class="value" x="509" y="487">14.66</text>
      </g></svg>
      <p class="foot">Max u-Y: 14.66, Min u-Y: -0.13 mm</p>`;
  }
}

/* ---------- result panel ---------- */

@customElement("result-panel")
class ResultPanel extends LitElement {
  static styles = [shared, css`
    :host { display: flex; flex-direction: column; min-width: 0; }
    .body {
      flex: 1; display: flex; flex-direction: column; background: #f0f0f0; color: #000; padding: 4px 2px 0 5px;
      border: 1px solid #dfe5f0; border-bottom-color: #70747c; font: 11px/17px "Liberation Sans", sans-serif;
    }
    p { margin: 0; }
    .legend {
      display: flex; justify-content: flex-end; gap: 1px; height: 214px; padding: 10px 8px 10px 0; margin-bottom: 10px;
      background: #fbf7ef; border: 1px solid #fff; border-color: #8c8c8c #fbf7ef #fff #8c8c8c;
    }
    .scale { width: 27px; height: 193px; border: 1px solid #000; display: flex; flex-direction: column; }
    .pos { flex: 1; background: #00f; border-bottom: 1px solid #000; }
    .neg { flex: 1; background: #f00; }
    .marks { display: flex; flex-direction: column; justify-content: space-between; margin: -8px 0; height: 209px; }
    .marks span { display: flex; align-items: center; justify-content: space-between; width: 36px; }
    .marks span::before { content: ""; width: 6px; height: 1px; margin-left: -1px; background: #000; }
    dl {
      display: grid; grid-template-columns: 28px 10px 28px; margin: 0 0 20px; padding: 1px 0 0 23px; height: 36px;
      background: #f1f4fa; border: 1px solid #d8e0f4; border-right: 0; border-bottom-color: #9ca8e0;
    }
    dt, dd { margin: 0; } dd { text-align: right; }
    .module { height: 23px; margin: 0 0 60px 4px; border: 1px solid #adadad; border-right: 0; background: #e1e1e1; padding-left: 28px; }
    .find { align-self: flex-end; width: 25px; height: 21px; margin-right: 1px; border: 1px solid #adadad; background: #e1e1e1; display: flex; align-items: center; justify-content: center; }
    .tabs { display: flex; height: 23px; padding-left: 4px; gap: 8px; flex: none; }
    .tabs button { width: 22px; height: 20px; display: flex; align-items: center; justify-content: center; }
    .tabs .on { background: #f3f6f8; border: 1px solid #b8e4e8; border-top: 0; border-radius: 0 0 3px 3px; }
  `];
  render() {
    return html`
      <div class="caption"><h2>Panel</h2><button aria-label="Pin">${icon("pin")}</button><button aria-label="Close">${icon("close")}</button></div>
      <div class="body">
        <p>Deformations</p><p>u-Y [mm]</p>
        <div class="legend">
          <div class="scale"><div class="pos"></div><div class="neg"></div></div>
          <div class="marks"><span>14.66</span><span>0.00</span><span>-0.13</span></div>
        </div>
        <dl><dt>Max</dt><dt>:</dt><dd>14.66</dd><dt>Min</dt><dt>:</dt><dd>-0.13</dd></dl>
        <button class="module">FE-LTB</button>
        <button class="find" aria-label="Find">${icon("find")}</button>
      </div>
      <div class="tabs"><button class="on" aria-label="Colors">${icon("tabColors")}</button>
        <button aria-label="Factors">${icon("tabScale")}</button><button aria-label="Filter">${icon("tabMic")}</button></div>`;
  }
}

/* ---------- application frame ---------- */

@customElement("app-root")
class AppRoot extends LitElement {
  static styles = [shared, css`
    :host {
      display: flex; flex-direction: column; height: 100vh; background: #cfd3dc; overflow: hidden;
      border: 1px solid #62656b; font: 11px "Open Sans", "Noto Sans", sans-serif;
    }
    .title { display: flex; align-items: center; height: 30px; background: #fff; padding: 0 0 2px 7px; color: #000; flex: none; }
    .title h1 { flex: 1; margin: 0 0 0 4px; font: inherit; }
    .title button { width: 46px; height: 28px; display: flex; align-items: center; justify-content: center; }
    .menu { display: flex; align-items: center; height: 24px; padding: 0 0 2px 4px; color: #46525f; flex: none; }
    .menu .icon { margin: 0 10px 0 4px; }
    .grip { width: 2px; height: 14px; background: repeating-linear-gradient(#f4f6fa 0 2px, transparent 2px 4px); }
    nav { flex: 1; display: flex; gap: 16px; }
    .menu u { text-underline-offset: 2px; }
    .mdi { display: flex; padding: 5px 2px 0 0; }
    .mdi button { width: 16px; }
    .work { flex: 1; display: grid; grid-template-columns: 285px minmax(0, 1fr) 123px; gap: 5px; min-height: 0; }
    .status {
      display: flex; align-items: center; height: 21px; margin-top: 1px; padding: 0 0 2px 4px; flex: none; color: #22262c; white-space: pre;
      background: linear-gradient(#dfe3ea, #b3bac4 45%, #9fa6b0 60%, #bcc3cc); font: 11px "Liberation Sans", sans-serif;
    }
    .status .hint { flex: 1; }
    .mode { height: 18px; padding: 0 2px; margin-right: 1px; border: 1px solid #fff; border-top-color: #000; border-left-color: #000; }
    .mode.up { border: 1px solid #d8dce2; border-right-color: #8a9099; border-bottom-color: #8a9099; background: #c3c8d0; padding: 0 5px 2px 1px; }
    .cell { width: 74px; height: 17px; line-height: 17px; padding-left: 2px; border-left: 1px solid #7f858e; }
    .cell.cs { width: 189px; text-align: right; padding-right: 12px; border-left: 0; }
    .cell.plane { width: 88px; }
    .cell.last { width: 78px; }
    .size { width: 12px; height: 12px; align-self: flex-end; background: radial-gradient(circle, #555c66 1px, transparent 1px) 0 0 / 4px 4px; clip-path: polygon(100% 0, 100% 100%, 0 100%); }
  `];

  render() {
    return html`
      <header class="title">${icon("app")}<h1>RSTAB 8.22.00 x64</h1>
        <button aria-label="Minimize"><svg width="11" height="11"><path d="M0 5.500h11" stroke="#000"/></svg></button>
        <button aria-label="Maximize"><svg width="11" height="11"><path d="M.5 .5h10v10H.5z" fill="none" stroke="#000"/></svg></button>
        <button aria-label="Close"><svg width="11" height="11"><path d="M.5 .5l10 10M10.500 .5l-10 10" stroke="#000"/></svg></button>
      </header>
      <div class="menu"><span class="grip"></span>
        <svg class="icon" width="16" height="13" viewBox="0 0 16 13"><path d="M0 0h16v13H0z" fill="#1c2455"/><path d="M0 9.500h16M6.500 2v9M11.500 6v5M6.500 2L1 9M6.500 2L15 8.500" stroke="#fff" stroke-width="1.200" fill="none"/></svg>
        <nav>${MENUS.map(([a, k, b]) => html`<button>${a}<u>${k}</u>${b}</button>`)}</nav>
        <div class="mdi">
          <button aria-label="Minimize document"><svg width="9" height="9"><path d="M1 7.500h7" stroke="#777d86" stroke-width="2"/></svg></button>
          <button aria-label="Restore document"><svg width="9" height="9"><path d="M.5 3h6v5h-6zM2.500 3V1h6v5h-2" fill="none" stroke="#777d86"/></svg></button>
          <button aria-label="Close document"><svg width="9" height="9"><path d="M1 1l7 7M8 1L1 8" stroke="#777d86" stroke-width="1.600"/></svg></button>
        </div>
      </div>
      <tool-strip .groups=${ROW1}></tool-strip>
      <tool-strip .groups=${ROW2}></tool-strip>
      <main class="work"><project-navigator></project-navigator><model-view></model-view><result-panel></result-panel></main>
      <footer class="status">
        <span class="hint">Workplane</span>
        <button class="mode">SNAP</button><button class="mode up">GRID</button><button class="mode">CARTES</button>
        <button class="mode">OSNAP</button><button class="mode">GLINES</button><button class="mode">DXF</button>
        <span class="cell cs">CS: Global XYZ</span><span class="cell plane">Plane: XZ</span>
        <span class="cell">X:  10.148 m</span><span class="cell">Y:  0.000 m</span><span class="cell last">Z:  -3.475 m</span><span class="size"></span>
      </footer>`;
  }
}
